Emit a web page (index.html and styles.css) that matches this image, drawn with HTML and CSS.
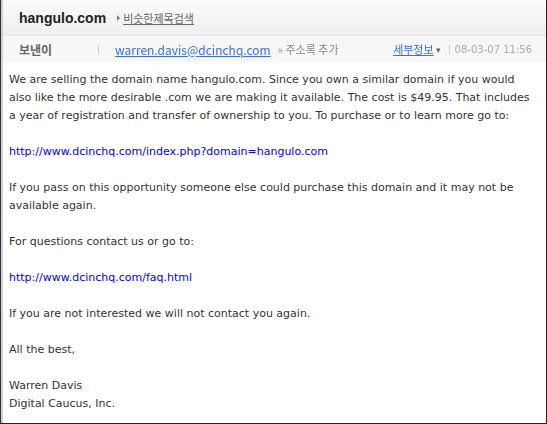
FILE: index.html
```html
<!DOCTYPE html>
<html>
<head>
<meta charset="utf-8">
<link rel="stylesheet" href="styles.css">
</head>
<body>
<div class="frame">
  <div class="inner">
    <div class="title-bar">
      <span class="title">hangulo.com</span>
      <span class="similar"><span class="tri"></span><a href="#">비슷한제목검색</a></span>
    </div>
    <div class="meta-bar">
      <span class="label">보낸이</span>
      <span class="sep"></span>
      <span class="email blur">warren.davis@dcinchq.com</span>
      <span class="addr blur">» 주소록 추가</span>
      <span class="spacer"></span>
      <span class="detail blur">세부정보</span>
      <span class="caret blur">▾</span>
      <span class="sep2"></span>
      <span class="date blur">08-03-07 11:56</span>
    </div>
    <div class="body">
      <p>We are selling the domain name hangulo.com. Since you own a similar domain if you would also like the more desirable .com we are making it available. The cost is $49.95. That includes a year of registration and transfer of ownership to you. To purchase or to learn more go to:</p>
      <p><a href="#">http://www.dcinchq.com/index.php?domain=hangulo.com</a></p>
      <p>If you pass on this opportunity someone else could purchase this domain and it may not be available again.</p>
      <p>For questions contact us or go to:</p>
      <p><a href="#">http://www.dcinchq.com/faq.html</a></p>
      <p>If you are not interested we will not contact you again.</p>
      <p>All the best,</p>
      <p>Warren Davis<br>Digital Caucus, Inc.</p>
    </div>
  </div>
</div>
</body>
</html>
```
FILE: styles.css
```css
html, body {
  margin: 0;
  padding: 0;
  background: #fff;
}
.frame {
  width: 547px;
  height: 424px;
  box-sizing: border-box;
  border-left: 1px solid #333;
  border-right: 1px solid #222;
  border-bottom: 1px solid #222;
  overflow: hidden;
}
.inner {
  height: 100%;
  border-left: 2px solid #cfcfcf;
  display: flex;
  flex-direction: column;
}
.title-bar {
  flex-shrink: 0;
  height: 36px;
  box-sizing: border-box;
  border-bottom: 1px solid #e4e4e4;
  background: linear-gradient(#fbfbfb, #efefef);
  display: flex;
  align-items: center;
  padding-left: 16px;
}
.title {
  font-family: "Liberation Sans", sans-serif;
  font-size: 14px;
  color: #222;
  font-weight: bold;
}
.similar {
  margin-left: 11px;
  display: flex;
  align-items: center;
  font-family: "Noto Sans CJK KR", sans-serif;
  font-size: 11px;
}
.tri {
  width: 0;
  height: 0;
  border-top: 3px solid transparent;
  border-bottom: 3px solid transparent;
  border-left: 3px solid #4a7fd8;
  margin-right: 3px;
}
.similar a {
  color: #666;
  text-decoration: underline;
}
.meta-bar {
  flex-shrink: 0;
  height: 26px;
  background: #f7f7f7;
  display: flex;
  align-items: center;
  padding-left: 16px;
  font-family: "Noto Sans CJK KR", sans-serif;
  font-size: 12px;
}
.label {
  color: #666;
  font-weight: bold;
  width: 79px;
}
.sep, .sep2 {
  width: 1px;
  height: 9px;
  background: #ccc;
}
.blur {
  filter: blur(0.7px);
}
.email {
  margin-left: 16px;
  color: #3a6fe0;
  text-decoration: underline;
}
.addr {
  margin-left: 7px;
  color: #888;
  font-size: 11px;
}
.spacer {
  flex: 1;
}
.detail {
  color: #3a6fe0;
  text-decoration: underline;
  font-size: 11px;
}
.caret {
  color: #666;
  font-size: 9px;
  margin: 0 8px 0 2px;
}
.date {
  margin-left: 5px;
  margin-right: 14px;
  color: #aaa;
  font-size: 10px;
  font-family: "DejaVu Sans", sans-serif;
}
.body {
  padding: 9px 10px 0 6px;
  font-family: "DejaVu Sans", sans-serif;
  font-size: 11px;
  line-height: 18px;
  color: #333;
}
.body p {
  margin: 0 0 18px 0;
}
.body a {
  color: #0000ee;
  text-decoration: none;
}
```
